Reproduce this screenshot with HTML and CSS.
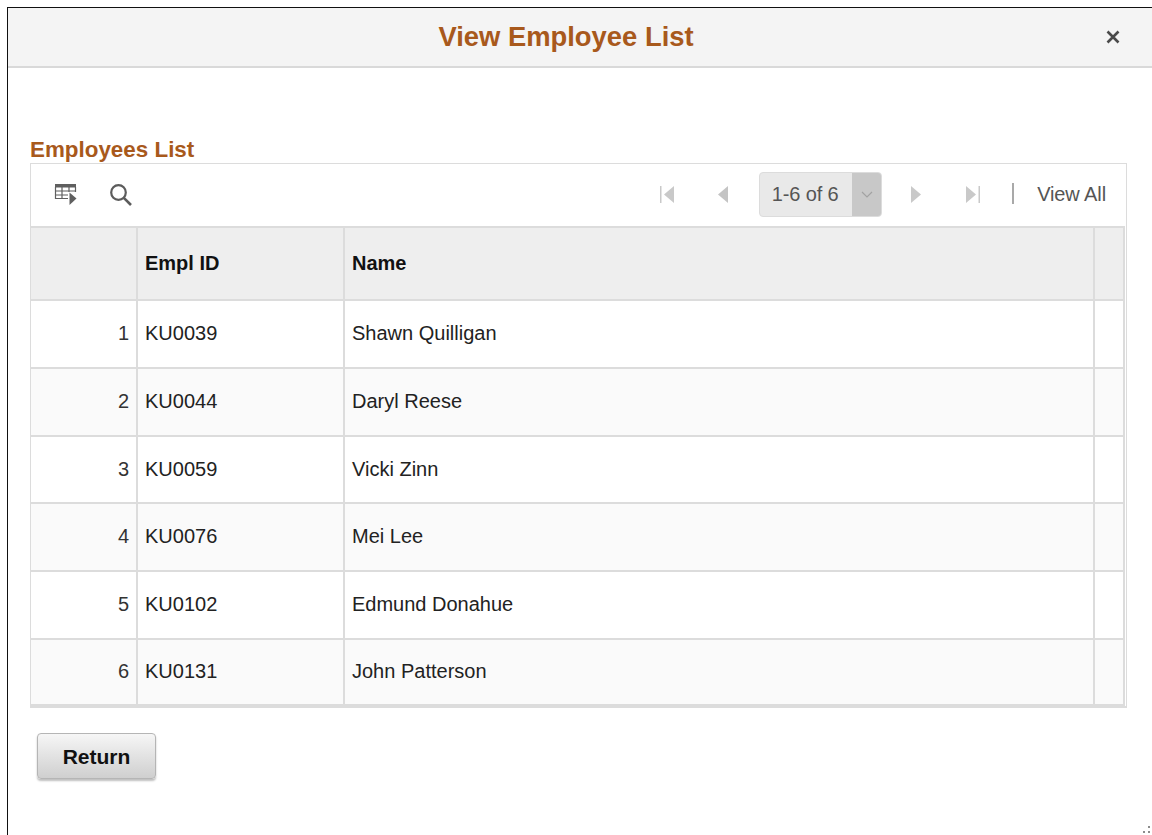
FILE: index.html
```html
<!DOCTYPE html>
<html lang="en">
<head>
<meta charset="utf-8">
<title>View Employee List</title>
<link rel="stylesheet" href="styles.css">
</head>
<body>
<div class="dialog">
  <header class="dialog-head">
    <h1 class="dialog-title">View Employee List</h1>
    <button class="close" type="button" aria-label="Close">
      <svg width="14" height="14" viewBox="0 0 14 14"><path d="M1.500 1.500 12.500 12.500M12.500 1.500 1.500 12.500" stroke="#4a4a4a" stroke-width="2.600" fill="none"/></svg>
    </button>
  </header>
  <main class="dialog-body">
    <h2 class="grid-title">Employees List</h2>
    <section class="grid-box">
      <div class="toolbar">
        <div class="tools">
          <svg class="tool-grid" width="24" height="24" viewBox="0 0 24 24">
            <path d="M1 1h21v3.500H1z" fill="#5f5f5f"/>
            <path d="M1.500 4v11.500H14M8 4v11.500M15 4v5M1.500 8h20M1.500 12h12.500M21.500 4v5" stroke="#5f5f5f" stroke-width="1.200" fill="none"/>
            <path d="M15.500 9.500 22.500 15.500 15.500 22z" fill="#5f5f5f"/>
          </svg>
          <svg class="tool-search" width="24" height="24" viewBox="0 0 24 24">
            <circle cx="9.500" cy="9.500" r="7.300" stroke="#5c5c5c" stroke-width="2.200" fill="none"/>
            <path d="M14.800 14.800 22 22" stroke="#5c5c5c" stroke-width="2.600" fill="none"/>
          </svg>
        </div>
        <nav class="pager">
          <svg class="nav-icon first" width="14" height="17" viewBox="0 0 14 17"><path d="M0 0h1.500v17H0zM14 0v17L4 8.500z" fill="#c9c9c9"/></svg>
          <svg class="nav-icon prev" width="10" height="17" viewBox="0 0 10 17"><path d="M10 0v17L0 8.500z" fill="#c4c4c4"/></svg>
          <div class="range">
            <span class="range-text">1-6 of 6</span>
            <span class="range-drop">
              <svg width="12" height="7" viewBox="0 0 12 7"><path d="M1 1 6 6 11 1" stroke="#a2a2a2" stroke-width="1.200" fill="none"/></svg>
            </span>
          </div>
          <svg class="nav-icon next" width="10" height="17" viewBox="0 0 10 17"><path d="M0 0v17L10 8.500z" fill="#c9c9c9"/></svg>
          <svg class="nav-icon last" width="14" height="17" viewBox="0 0 14 17"><path d="M0 0v17L10 8.500zM12.500 0H14v17h-1.500z" fill="#c9c9c9"/></svg>
          <span class="divider"></span>
          <a class="view-all" href="#">View All</a>
        </nav>
      </div>
      <table class="emp-table">
        <colgroup>
          <col class="c-row"><col class="c-id"><col class="c-name"><col class="c-end">
        </colgroup>
        <thead>
          <tr><th></th><th>Empl ID</th><th>Name</th><th></th></tr>
        </thead>
        <tbody>
          <tr><td class="num">1</td><td>KU0039</td><td>Shawn Quilligan</td><td></td></tr>
          <tr><td class="num">2</td><td>KU0044</td><td>Daryl Reese</td><td></td></tr>
          <tr class="short"><td class="num">3</td><td>KU0059</td><td>Vicki Zinn</td><td></td></tr>
          <tr><td class="num">4</td><td>KU0076</td><td>Mei Lee</td><td></td></tr>
          <tr><td class="num">5</td><td>KU0102</td><td>Edmund Donahue</td><td></td></tr>
          <tr class="last-row"><td class="num">6</td><td>KU0131</td><td>John Patterson</td><td></td></tr>
        </tbody>
      </table>
    </section>
    <button class="return" type="button">Return</button>
  </main>
  <div class="grip" aria-hidden="true"><i></i><i></i><i></i></div>
</div>
</body>
</html>
```
FILE: styles.css
```css
* { box-sizing: border-box; }

html, body { height: 100%; }

body {
  margin: 0;
  padding: 7px 0 0 7px;
  background: #fff;
  font-family: "Liberation Sans", Arial, sans-serif;
  color: #333;
  overflow: hidden;
}

.dialog {
  position: relative;
  height: 828px;
  border-top: 1px solid #111;
  border-left: 1px solid #111;
}

.dialog-head {
  position: relative;
  display: flex;
  align-items: center;
  justify-content: center;
  height: 60px;
  padding-right: 28px;
  background: #f4f4f4;
  border-bottom: 2px solid #d9d9d9;
}

.dialog-title {
  margin: 0;
  font-size: 27.400px;
  font-weight: bold;
  color: #a8591c;
}

.close {
  position: absolute;
  top: 22px;
  right: 32px;
  display: flex;
  padding: 0;
  border: 0;
  background: none;
}

.dialog-body {
  padding: 70px 25px 0 22px;
}

.grid-title {
  margin: 0;
  height: 25px;
  line-height: 23px;
  font-size: 22.400px;
  font-weight: bold;
  color: #a8591c;
}

.grid-box {
  width: 1097px;
  border: 1px solid #dcdcdc;
  border-bottom: 2px solid #dcdcdc;
  padding-right: 1px;
  background: #fff;
}

.toolbar {
  display: flex;
  align-items: center;
  justify-content: space-between;
  height: 62px;
  padding: 0 19px 1px 23px;
}

.tools {
  display: flex;
  align-items: center;
  gap: 31px;
}

.pager {
  display: flex;
  align-items: center;
  font-size: 20px;
}

.nav-icon { display: block; }
.nav-icon.first { margin-right: 44px; }
.nav-icon.prev { margin-right: 31px; }
.nav-icon.next { margin-left: 29px; }
.nav-icon.last { margin-left: 45px; }

.range {
  display: flex;
  height: 45px;
  width: 123px;
  border: 1px solid #dcdcdc;
  border-radius: 4px;
  background: #e9e9e9;
  overflow: hidden;
}

.range-text {
  flex: 1;
  padding-right: 2px;
  line-height: 43px;
  text-align: center;
  letter-spacing: -0.150px;
  color: #555;
}

.range-drop {
  display: flex;
  align-items: center;
  justify-content: center;
  width: 29px;
  background: #c8c8c8;
}

.divider {
  width: 2px;
  height: 21px;
  margin: -2px 23px 0 32px;
  background: #a9a9a9;
}

.view-all {
  color: #555;
  letter-spacing: -0.100px;
  text-decoration: none;
}

.emp-table {
  width: 1094px;
  border-collapse: separate;
  border-spacing: 0;
  table-layout: fixed;
  font-size: 20px;
}

.c-row { width: 107px; }
.c-id { width: 207px; }
.c-name { width: 750px; }
.c-end { width: 30px; }

.emp-table th,
.emp-table td {
  padding: 0 7px;
  border-right: 2px solid #dcdcdc;
  border-bottom: 2px solid #dcdcdc;
  text-align: left;
  color: #222;
}

.emp-table th {
  height: 75px;
  border-top: 2px solid #dcdcdc;
  font-weight: bold;
  color: #111;
  background: #eee;
}

.emp-table td {
  height: 68px;
  padding-bottom: 2px;
}

.emp-table .short td {
  height: 67px;
  padding-bottom: 0;
}

.emp-table .last-row td { height: 66px; }
.emp-table tbody tr:nth-child(even) { background: #fafafa; }
.emp-table td.num { text-align: right; color: #333; }

.return {
  display: block;
  width: 119px;
  height: 46px;
  margin: 25px 0 0 7px;
  padding: 2px 0 0;
  border: 1px solid #b5b5b5;
  border-radius: 4px;
  background: linear-gradient(#f6f6f6, #cfcfcf);
  box-shadow: 0 2px 2px rgba(0, 0, 0, 0.25);
  font: bold 21px "Liberation Sans", Arial, sans-serif;
  color: #111;
}

.grip {
  position: absolute;
  right: 1px;
  bottom: 0;
  width: 10px;
  height: 9px;
}

.grip i {
  position: absolute;
  width: 2px;
  height: 2px;
  background: #8c8c8c;
}

.grip i:nth-child(1) { right: 1px; top: 0; }
.grip i:nth-child(2) { right: 1px; top: 5px; }
.grip i:nth-child(3) { right: 6px; top: 5px; }
```
